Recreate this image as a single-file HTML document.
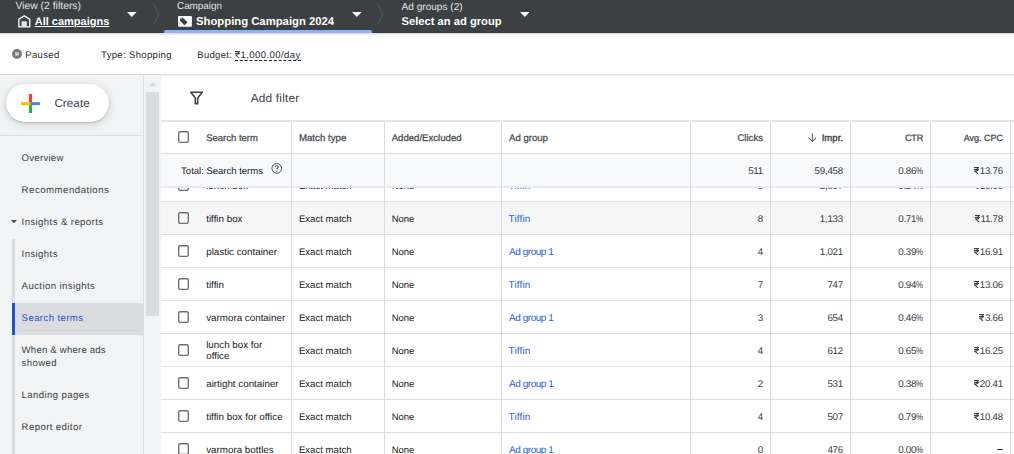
<!DOCTYPE html>
<html><head><meta charset="utf-8"><style>
html,body{margin:0;padding:0;}
body{width:1014px;height:454px;overflow:hidden;position:relative;background:#fff;font-family:"Liberation Sans",sans-serif;}
.t{position:absolute;white-space:nowrap;line-height:20px;text-rendering:geometricPrecision;}
.r{position:absolute;}
.cb{position:absolute;width:8.6px;height:9.4px;border:1.5px solid #6a6c6f;border-radius:1.2px;}
</style></head><body>
<div class="r" style="left:0px;top:0px;width:1014px;height:33px;background:#3c4043;"></div>
<div class="r" style="left:0px;top:32px;width:1014px;height:1px;background:#36393c;"></div>
<div class="r" style="left:0px;top:33px;width:1014px;height:2px;background:linear-gradient(#dcdde0,#f0f1f2);"></div>
<div class="t" style="top:-3px;font-size:10.4px;color:#e0e2e5;left:15.40px;">View (2 filters)</div>
<div class="t" style="top:12px;font-size:11px;color:#ffffff;font-weight:700;left:34.70px;text-decoration:underline;text-underline-offset:0.6px;text-decoration-thickness:1px;">All campaigns</div>
<div class="t" style="top:-3px;font-size:9.9px;color:#e0e2e5;left:177.00px;">Campaign</div>
<div class="t" style="top:12px;font-size:11.3px;color:#ffffff;font-weight:700;left:196.00px;">Shopping Campaign 2024</div>
<div class="t" style="top:-2px;font-size:10.1px;color:#e0e2e5;left:401.50px;">Ad groups (2)</div>
<div class="t" style="top:12px;font-size:11.2px;color:#ffffff;font-weight:700;left:401.50px;">Select an ad group</div>
<svg class="r" style="left:17.5px;top:14.5px" width="13" height="13" viewBox="0 0 13 13"><path d="M0.85 11.85V4.3L6.3 0.85L11.75 4.3V11.85Z" fill="none" stroke="#fff" stroke-width="1.3" stroke-linejoin="round"/><rect x="3.5" y="6.3" width="5.3" height="5.6" fill="#e6e6e6"/></svg>
<svg class="r" style="left:178px;top:15.5px" width="14" height="11" viewBox="0 0 14 11"><rect x="0" y="0.1" width="13.9" height="10.7" rx="1.2" fill="#fff"/><path d="M1.95 1.66H4.6L9.5 5.9L6.5 9.4L1.95 4.5Z" fill="#3c4043"/><circle cx="2.95" cy="2.7" r="0.65" fill="#fff"/></svg>
<svg class="r" style="left:127.3px;top:12.1px" width="9.6" height="4.9" viewBox="0 0 9.6 4.9"><path d="M0 0H9.6L4.8 4.9Z" fill="#fff"/></svg>
<svg class="r" style="left:352.2px;top:12.1px" width="9.6" height="4.9" viewBox="0 0 9.6 4.9"><path d="M0 0H9.6L4.8 4.9Z" fill="#fff"/></svg>
<svg class="r" style="left:519.8px;top:12.1px" width="9.6" height="4.9" viewBox="0 0 9.6 4.9"><path d="M0 0H9.6L4.8 4.9Z" fill="#fff"/></svg>
<svg class="r" style="left:153px;top:3px" width="8" height="23" viewBox="0 0 8 23"><path d="M0.6 0.6L6.0 11.2L0.6 21.6" fill="none" stroke="#5f6367" stroke-width="0.85"/></svg>
<svg class="r" style="left:377px;top:3px" width="8" height="23" viewBox="0 0 8 23"><path d="M0.6 0.6L6.0 11.2L0.6 21.6" fill="none" stroke="#5f6367" stroke-width="0.85"/></svg>
<div class="r" style="left:164px;top:30px;width:208px;height:3px;background:#8ab4f8;border-radius:2px 2px 0 0;"></div>
<svg class="r" style="left:12px;top:49.2px" width="10" height="10" viewBox="0 0 10 10"><circle cx="5" cy="4.9" r="4.95" fill="#777879"/><rect x="3.1" y="3.1" width="3.7" height="3.5" fill="#cdcdcd"/></svg>
<div class="t" style="top:46px;font-size:9.6px;color:#2b2e31;letter-spacing:0.3px;left:25.20px;">Paused</div>
<div class="t" style="top:46px;font-size:9.6px;color:#2b2e31;letter-spacing:0.3px;left:101.00px;">Type: Shopping</div>
<div class="t" style="top:46px;font-size:9.5px;color:#2b2e31;letter-spacing:0.3px;left:197.30px;">Budget:</div>
<div class="t" style="top:46px;font-size:9.6px;color:#2b2e31;letter-spacing:0.4px;left:234.60px;"><svg width="5" height="6.8" viewBox="0 0 5 7" preserveAspectRatio="none" style="display:inline-block;vertical-align:0;margin-right:0.8px"><path d="M0 0.55H5M0 2.45H5M0.6 0.55C3.3 0.55 3.9 1.5 3.9 2.3C3.9 3.4 2.9 4.1 1.2 4.1H0.6L3.9 6.9" fill="none" stroke="#2b2e31" stroke-width="0.95"/></svg>1,000.00/day</div>
<div class="r" style="left:234.5px;top:60px;width:66px;height:0;border-top:1px dashed #202124"></div>
<div class="r" style="left:0px;top:74px;width:1014px;height:1px;background:#dadce0;"></div>
<div class="r" style="left:161px;top:75px;width:853px;height:1px;background:#f2f3f4;"></div>
<div class="r" style="left:0px;top:75px;width:143px;height:379px;background:#f1f3f4;"></div>
<div class="r" style="left:143px;top:75px;width:1px;height:379px;background:#dadce0;"></div>
<div class="r" style="left:144px;top:75px;width:17px;height:379px;background:#f1f3f4;"></div>
<svg class="r" style="left:148.9px;top:81.9px" width="7.2" height="4.3" viewBox="0 0 7.2 4.3"><path d="M0 4.3H7.2L3.6 0Z" fill="#d6d8dc"/></svg>
<div class="r" style="left:146px;top:92px;width:13px;height:224px;background:#dadce0;"></div>
<div class="r" style="left:6px;top:84px;width:103px;height:38px;background:#ffffff;border-radius:19px;box-shadow:0 1px 2px 0 rgba(60,64,67,.25),0 2px 6px 2px rgba(60,64,67,.12);"></div>
<svg class="r" style="left:20.7px;top:94px" width="19" height="19" viewBox="0 0 19 19"><rect x="7.9" y="0" width="3.2" height="9.5" fill="#ea4335"/><rect x="9.5" y="8.1" width="9.5" height="3" fill="#4285f4"/><rect x="7.9" y="9.5" width="3.2" height="9.5" fill="#34a853"/><rect x="0" y="8.1" width="9.5" height="3" fill="#fbbc04"/></svg>
<div class="t" style="top:94px;font-size:11.6px;color:#3c4043;letter-spacing:0.1px;left:54.40px;">Create</div>
<div class="r" style="left:0px;top:135px;width:143px;height:1px;background:#dadce0;"></div>
<div class="t" style="top:149px;font-size:9.6px;color:#3c4043;letter-spacing:0.25px;left:21.60px;">Overview</div>
<div class="t" style="top:181px;font-size:9.6px;color:#3c4043;letter-spacing:0.52px;left:21.60px;">Recommendations</div>
<div class="t" style="top:213px;font-size:9.6px;color:#3c4043;letter-spacing:0.4px;left:21.60px;">Insights &amp; reports</div>
<div class="t" style="top:245px;font-size:9.6px;color:#3c4043;letter-spacing:0.4px;left:21.60px;">Insights</div>
<div class="t" style="top:277px;font-size:9.6px;color:#3c4043;letter-spacing:0.4px;left:21.60px;">Auction insights</div>
<svg class="r" style="left:11px;top:220px" width="6" height="3.2" viewBox="0 0 6 3.2"><path d="M0 0H6L3 3.2Z" fill="#44484c"/></svg>
<div class="r" style="left:12px;top:239px;width:3px;height:215px;background:#dadce0;"></div>
<div class="r" style="left:12px;top:303px;width:131px;height:32px;background:#dadce0;"></div>
<div class="r" style="left:12px;top:303px;width:3px;height:32px;background:#1a56c4;"></div>
<div class="t" style="top:309px;font-size:9.6px;color:#1a56c4;letter-spacing:0.4px;left:21.60px;">Search terms</div>
<div class="t" style="top:341px;font-size:9.6px;color:#3c4043;letter-spacing:0.2px;left:21.60px;">When &amp; where ads</div>
<div class="t" style="top:354px;font-size:9.6px;color:#3c4043;letter-spacing:0.4px;left:21.60px;">showed</div>
<div class="t" style="top:386px;font-size:9.6px;color:#3c4043;letter-spacing:0.4px;left:21.60px;">Landing pages</div>
<div class="t" style="top:418px;font-size:9.6px;color:#3c4043;letter-spacing:0.4px;left:21.60px;">Report editor</div>
<svg class="r" style="left:190px;top:90.5px" width="13" height="14" viewBox="0 0 13 14"><path d="M0.75 1.25H12.25L7.7 6.9V12.6H5.3V6.9Z" fill="none" stroke="#3c4043" stroke-width="1.55" stroke-linejoin="miter"/></svg>
<div class="t" style="top:88px;font-size:11.8px;color:#3c4043;letter-spacing:0.22px;left:250.70px;">Add filter</div>
<div class="r" style="left:161px;top:120px;width:853px;height:2px;background:#e4e5e7;"></div>
<div class="r" style="left:161px;top:153px;width:853px;height:1px;background:#dadce0;"></div>
<div class="r" style="left:161px;top:154px;width:853px;height:32px;background:#f8f9fa;"></div>
<div class="r" style="left:0;top:187px;width:1014px;height:267px;overflow:hidden"><div class="r" style="left:161px;top:14px;width:853px;height:1px;background:#dddee1;"></div><svg class="r" style="left:178.1px;top:-8px" width="11" height="12" viewBox="0 0 11 12"><rect x="0.7" y="0.7" width="9.6" height="10.6" rx="1.4" fill="none" stroke="#6c6e71" stroke-width="1.35"/></svg><div class="t" style="top:-10px;font-size:9.8px;color:#202124;left:206.20px;">lunch box</div><div class="t" style="top:-10px;font-size:9.6px;color:#202124;left:298.90px;">Exact match</div><div class="t" style="top:-10px;font-size:9.5px;color:#202124;left:391.70px;">None</div><div class="t" style="top:-10px;font-size:10px;color:#1b64d6;letter-spacing:0.15px;left:508.50px;">Tiffin</div><div class="t" style="top:-10px;font-size:9.8px;color:#3a3d40;letter-spacing:-0.25px;right:251.00px;text-align:right;">5</div><div class="t" style="top:-10px;font-size:9.8px;color:#3a3d40;letter-spacing:-0.25px;right:171.00px;text-align:right;">2,807</div><div class="t" style="top:-10px;font-size:9.8px;color:#3a3d40;letter-spacing:-0.25px;right:91.00px;text-align:right;">0.24<span style="display:inline-block;transform:scaleX(0.8);transform-origin:left;margin-right:-1.75px">%</span></div><div class="t" style="top:-10px;font-size:9.8px;color:#3a3d40;letter-spacing:-0.25px;right:11.00px;text-align:right;"><svg width="5.2" height="7" viewBox="0 0 5 7" preserveAspectRatio="none" style="display:inline-block;vertical-align:0;margin-right:0.7px"><path d="M0 0.55H5M0 2.45H5M0.6 0.55C3.3 0.55 3.9 1.5 3.9 2.3C3.9 3.4 2.9 4.1 1.2 4.1H0.6L3.9 6.9" fill="none" stroke="#3a3d40" stroke-width="1.05"/></svg>15.05</div><div class="r" style="left:161px;top:15px;width:853px;height:32px;background:#f6f6f6;"></div><div class="r" style="left:161px;top:47px;width:853px;height:1px;background:#dddee1;"></div><svg class="r" style="left:178.1px;top:25px" width="11" height="12" viewBox="0 0 11 12"><rect x="0.7" y="0.7" width="9.6" height="10.6" rx="1.4" fill="none" stroke="#6c6e71" stroke-width="1.35"/></svg><div class="t" style="top:23px;font-size:9.8px;color:#202124;left:206.20px;">tiffin box</div><div class="t" style="top:23px;font-size:9.6px;color:#202124;left:298.90px;">Exact match</div><div class="t" style="top:23px;font-size:9.5px;color:#202124;left:391.70px;">None</div><div class="t" style="top:23px;font-size:10px;color:#1b64d6;letter-spacing:0.15px;left:508.50px;">Tiffin</div><div class="t" style="top:23px;font-size:9.8px;color:#3a3d40;letter-spacing:-0.25px;right:251.00px;text-align:right;">8</div><div class="t" style="top:23px;font-size:9.8px;color:#3a3d40;letter-spacing:-0.25px;right:171.00px;text-align:right;">1,133</div><div class="t" style="top:23px;font-size:9.8px;color:#3a3d40;letter-spacing:-0.25px;right:91.00px;text-align:right;">0.71<span style="display:inline-block;transform:scaleX(0.8);transform-origin:left;margin-right:-1.75px">%</span></div><div class="t" style="top:23px;font-size:9.8px;color:#3a3d40;letter-spacing:-0.25px;right:11.00px;text-align:right;"><svg width="5.2" height="7" viewBox="0 0 5 7" preserveAspectRatio="none" style="display:inline-block;vertical-align:0;margin-right:0.7px"><path d="M0 0.55H5M0 2.45H5M0.6 0.55C3.3 0.55 3.9 1.5 3.9 2.3C3.9 3.4 2.9 4.1 1.2 4.1H0.6L3.9 6.9" fill="none" stroke="#3a3d40" stroke-width="1.05"/></svg>11.78</div><div class="r" style="left:161px;top:80px;width:853px;height:1px;background:#dddee1;"></div><svg class="r" style="left:178.1px;top:58px" width="11" height="12" viewBox="0 0 11 12"><rect x="0.7" y="0.7" width="9.6" height="10.6" rx="1.4" fill="none" stroke="#6c6e71" stroke-width="1.35"/></svg><div class="t" style="top:56px;font-size:9.8px;color:#202124;left:206.20px;">plastic container</div><div class="t" style="top:56px;font-size:9.6px;color:#202124;left:298.90px;">Exact match</div><div class="t" style="top:56px;font-size:9.5px;color:#202124;left:391.70px;">None</div><div class="t" style="top:56px;font-size:10px;color:#1b64d6;letter-spacing:-0.45px;left:509.00px;">Ad group 1</div><div class="t" style="top:56px;font-size:9.8px;color:#3a3d40;letter-spacing:-0.25px;right:251.00px;text-align:right;">4</div><div class="t" style="top:56px;font-size:9.8px;color:#3a3d40;letter-spacing:-0.25px;right:171.00px;text-align:right;">1,021</div><div class="t" style="top:56px;font-size:9.8px;color:#3a3d40;letter-spacing:-0.25px;right:91.00px;text-align:right;">0.39<span style="display:inline-block;transform:scaleX(0.8);transform-origin:left;margin-right:-1.75px">%</span></div><div class="t" style="top:56px;font-size:9.8px;color:#3a3d40;letter-spacing:-0.25px;right:11.00px;text-align:right;"><svg width="5.2" height="7" viewBox="0 0 5 7" preserveAspectRatio="none" style="display:inline-block;vertical-align:0;margin-right:0.7px"><path d="M0 0.55H5M0 2.45H5M0.6 0.55C3.3 0.55 3.9 1.5 3.9 2.3C3.9 3.4 2.9 4.1 1.2 4.1H0.6L3.9 6.9" fill="none" stroke="#3a3d40" stroke-width="1.05"/></svg>16.91</div><div class="r" style="left:161px;top:113px;width:853px;height:1px;background:#dddee1;"></div><svg class="r" style="left:178.1px;top:91px" width="11" height="12" viewBox="0 0 11 12"><rect x="0.7" y="0.7" width="9.6" height="10.6" rx="1.4" fill="none" stroke="#6c6e71" stroke-width="1.35"/></svg><div class="t" style="top:89px;font-size:9.8px;color:#202124;left:206.20px;">tiffin</div><div class="t" style="top:89px;font-size:9.6px;color:#202124;left:298.90px;">Exact match</div><div class="t" style="top:89px;font-size:9.5px;color:#202124;left:391.70px;">None</div><div class="t" style="top:89px;font-size:10px;color:#1b64d6;letter-spacing:0.15px;left:508.50px;">Tiffin</div><div class="t" style="top:89px;font-size:9.8px;color:#3a3d40;letter-spacing:-0.25px;right:251.00px;text-align:right;">7</div><div class="t" style="top:89px;font-size:9.8px;color:#3a3d40;letter-spacing:-0.25px;right:171.00px;text-align:right;">747</div><div class="t" style="top:89px;font-size:9.8px;color:#3a3d40;letter-spacing:-0.25px;right:91.00px;text-align:right;">0.94<span style="display:inline-block;transform:scaleX(0.8);transform-origin:left;margin-right:-1.75px">%</span></div><div class="t" style="top:89px;font-size:9.8px;color:#3a3d40;letter-spacing:-0.25px;right:11.00px;text-align:right;"><svg width="5.2" height="7" viewBox="0 0 5 7" preserveAspectRatio="none" style="display:inline-block;vertical-align:0;margin-right:0.7px"><path d="M0 0.55H5M0 2.45H5M0.6 0.55C3.3 0.55 3.9 1.5 3.9 2.3C3.9 3.4 2.9 4.1 1.2 4.1H0.6L3.9 6.9" fill="none" stroke="#3a3d40" stroke-width="1.05"/></svg>13.06</div><div class="r" style="left:161px;top:146px;width:853px;height:1px;background:#dddee1;"></div><svg class="r" style="left:178.1px;top:124px" width="11" height="12" viewBox="0 0 11 12"><rect x="0.7" y="0.7" width="9.6" height="10.6" rx="1.4" fill="none" stroke="#6c6e71" stroke-width="1.35"/></svg><div class="t" style="top:122px;font-size:9.8px;color:#202124;left:206.20px;">varmora container</div><div class="t" style="top:122px;font-size:9.6px;color:#202124;left:298.90px;">Exact match</div><div class="t" style="top:122px;font-size:9.5px;color:#202124;left:391.70px;">None</div><div class="t" style="top:122px;font-size:10px;color:#1b64d6;letter-spacing:-0.45px;left:509.00px;">Ad group 1</div><div class="t" style="top:122px;font-size:9.8px;color:#3a3d40;letter-spacing:-0.25px;right:251.00px;text-align:right;">3</div><div class="t" style="top:122px;font-size:9.8px;color:#3a3d40;letter-spacing:-0.25px;right:171.00px;text-align:right;">654</div><div class="t" style="top:122px;font-size:9.8px;color:#3a3d40;letter-spacing:-0.25px;right:91.00px;text-align:right;">0.46<span style="display:inline-block;transform:scaleX(0.8);transform-origin:left;margin-right:-1.75px">%</span></div><div class="t" style="top:122px;font-size:9.8px;color:#3a3d40;letter-spacing:-0.25px;right:11.00px;text-align:right;"><svg width="5.2" height="7" viewBox="0 0 5 7" preserveAspectRatio="none" style="display:inline-block;vertical-align:0;margin-right:0.7px"><path d="M0 0.55H5M0 2.45H5M0.6 0.55C3.3 0.55 3.9 1.5 3.9 2.3C3.9 3.4 2.9 4.1 1.2 4.1H0.6L3.9 6.9" fill="none" stroke="#3a3d40" stroke-width="1.05"/></svg>3.66</div><div class="r" style="left:161px;top:179px;width:853px;height:1px;background:#dddee1;"></div><svg class="r" style="left:178.1px;top:157px" width="11" height="12" viewBox="0 0 11 12"><rect x="0.7" y="0.7" width="9.6" height="10.6" rx="1.4" fill="none" stroke="#6c6e71" stroke-width="1.35"/></svg><div class="t" style="top:149px;font-size:9.8px;color:#202124;left:206.20px;">lunch box for</div><div class="t" style="top:160px;font-size:9.8px;color:#202124;left:206.20px;">office</div><div class="t" style="top:155px;font-size:9.6px;color:#202124;left:298.90px;">Exact match</div><div class="t" style="top:155px;font-size:9.5px;color:#202124;left:391.70px;">None</div><div class="t" style="top:155px;font-size:10px;color:#1b64d6;letter-spacing:0.15px;left:508.50px;">Tiffin</div><div class="t" style="top:155px;font-size:9.8px;color:#3a3d40;letter-spacing:-0.25px;right:251.00px;text-align:right;">4</div><div class="t" style="top:155px;font-size:9.8px;color:#3a3d40;letter-spacing:-0.25px;right:171.00px;text-align:right;">612</div><div class="t" style="top:155px;font-size:9.8px;color:#3a3d40;letter-spacing:-0.25px;right:91.00px;text-align:right;">0.65<span style="display:inline-block;transform:scaleX(0.8);transform-origin:left;margin-right:-1.75px">%</span></div><div class="t" style="top:155px;font-size:9.8px;color:#3a3d40;letter-spacing:-0.25px;right:11.00px;text-align:right;"><svg width="5.2" height="7" viewBox="0 0 5 7" preserveAspectRatio="none" style="display:inline-block;vertical-align:0;margin-right:0.7px"><path d="M0 0.55H5M0 2.45H5M0.6 0.55C3.3 0.55 3.9 1.5 3.9 2.3C3.9 3.4 2.9 4.1 1.2 4.1H0.6L3.9 6.9" fill="none" stroke="#3a3d40" stroke-width="1.05"/></svg>16.25</div><div class="r" style="left:161px;top:212px;width:853px;height:1px;background:#dddee1;"></div><svg class="r" style="left:178.1px;top:190px" width="11" height="12" viewBox="0 0 11 12"><rect x="0.7" y="0.7" width="9.6" height="10.6" rx="1.4" fill="none" stroke="#6c6e71" stroke-width="1.35"/></svg><div class="t" style="top:188px;font-size:9.8px;color:#202124;left:206.20px;">airtight container</div><div class="t" style="top:188px;font-size:9.6px;color:#202124;left:298.90px;">Exact match</div><div class="t" style="top:188px;font-size:9.5px;color:#202124;left:391.70px;">None</div><div class="t" style="top:188px;font-size:10px;color:#1b64d6;letter-spacing:-0.45px;left:509.00px;">Ad group 1</div><div class="t" style="top:188px;font-size:9.8px;color:#3a3d40;letter-spacing:-0.25px;right:251.00px;text-align:right;">2</div><div class="t" style="top:188px;font-size:9.8px;color:#3a3d40;letter-spacing:-0.25px;right:171.00px;text-align:right;">531</div><div class="t" style="top:188px;font-size:9.8px;color:#3a3d40;letter-spacing:-0.25px;right:91.00px;text-align:right;">0.38<span style="display:inline-block;transform:scaleX(0.8);transform-origin:left;margin-right:-1.75px">%</span></div><div class="t" style="top:188px;font-size:9.8px;color:#3a3d40;letter-spacing:-0.25px;right:11.00px;text-align:right;"><svg width="5.2" height="7" viewBox="0 0 5 7" preserveAspectRatio="none" style="display:inline-block;vertical-align:0;margin-right:0.7px"><path d="M0 0.55H5M0 2.45H5M0.6 0.55C3.3 0.55 3.9 1.5 3.9 2.3C3.9 3.4 2.9 4.1 1.2 4.1H0.6L3.9 6.9" fill="none" stroke="#3a3d40" stroke-width="1.05"/></svg>20.41</div><div class="r" style="left:161px;top:245px;width:853px;height:1px;background:#dddee1;"></div><svg class="r" style="left:178.1px;top:223px" width="11" height="12" viewBox="0 0 11 12"><rect x="0.7" y="0.7" width="9.6" height="10.6" rx="1.4" fill="none" stroke="#6c6e71" stroke-width="1.35"/></svg><div class="t" style="top:221px;font-size:9.8px;color:#202124;left:206.20px;">tiffin box for office</div><div class="t" style="top:221px;font-size:9.6px;color:#202124;left:298.90px;">Exact match</div><div class="t" style="top:221px;font-size:9.5px;color:#202124;left:391.70px;">None</div><div class="t" style="top:221px;font-size:10px;color:#1b64d6;letter-spacing:0.15px;left:508.50px;">Tiffin</div><div class="t" style="top:221px;font-size:9.8px;color:#3a3d40;letter-spacing:-0.25px;right:251.00px;text-align:right;">4</div><div class="t" style="top:221px;font-size:9.8px;color:#3a3d40;letter-spacing:-0.25px;right:171.00px;text-align:right;">507</div><div class="t" style="top:221px;font-size:9.8px;color:#3a3d40;letter-spacing:-0.25px;right:91.00px;text-align:right;">0.79<span style="display:inline-block;transform:scaleX(0.8);transform-origin:left;margin-right:-1.75px">%</span></div><div class="t" style="top:221px;font-size:9.8px;color:#3a3d40;letter-spacing:-0.25px;right:11.00px;text-align:right;"><svg width="5.2" height="7" viewBox="0 0 5 7" preserveAspectRatio="none" style="display:inline-block;vertical-align:0;margin-right:0.7px"><path d="M0 0.55H5M0 2.45H5M0.6 0.55C3.3 0.55 3.9 1.5 3.9 2.3C3.9 3.4 2.9 4.1 1.2 4.1H0.6L3.9 6.9" fill="none" stroke="#3a3d40" stroke-width="1.05"/></svg>10.48</div><div class="r" style="left:161px;top:278px;width:853px;height:1px;background:#dddee1;"></div><svg class="r" style="left:178.1px;top:256px" width="11" height="12" viewBox="0 0 11 12"><rect x="0.7" y="0.7" width="9.6" height="10.6" rx="1.4" fill="none" stroke="#6c6e71" stroke-width="1.35"/></svg><div class="t" style="top:254px;font-size:9.8px;color:#202124;left:206.20px;">varmora bottles</div><div class="t" style="top:254px;font-size:9.6px;color:#202124;left:298.90px;">Exact match</div><div class="t" style="top:254px;font-size:9.5px;color:#202124;left:391.70px;">None</div><div class="t" style="top:254px;font-size:10px;color:#1b64d6;letter-spacing:-0.45px;left:509.00px;">Ad group 1</div><div class="t" style="top:254px;font-size:9.8px;color:#3a3d40;letter-spacing:-0.25px;right:251.00px;text-align:right;">0</div><div class="t" style="top:254px;font-size:9.8px;color:#3a3d40;letter-spacing:-0.25px;right:171.00px;text-align:right;">476</div><div class="t" style="top:254px;font-size:9.8px;color:#3a3d40;letter-spacing:-0.25px;right:91.00px;text-align:right;">0.00<span style="display:inline-block;transform:scaleX(0.8);transform-origin:left;margin-right:-1.75px">%</span></div><div class="r" style="left:996.6px;top:262.4px;width:6.5px;height:1.1px;background:#33363a;"></div></div>
<div class="r" style="left:161px;top:186px;width:853px;height:2px;background:#e8eaed;"></div>
<svg class="r" style="left:178.1px;top:131.2px" width="11" height="12" viewBox="0 0 11 12"><rect x="0.7" y="0.7" width="9.6" height="10.6" rx="1.4" fill="none" stroke="#6c6e71" stroke-width="1.35"/></svg>
<div class="t" style="top:129px;font-size:9.5px;color:#4d5155;left:206.20px;-webkit-text-stroke:0.3px #4d5155;">Search term</div>
<div class="t" style="top:129px;font-size:9.7px;color:#4d5155;left:298.90px;-webkit-text-stroke:0.3px #4d5155;">Match type</div>
<div class="t" style="top:129px;font-size:9.6px;color:#4d5155;left:391.70px;-webkit-text-stroke:0.3px #4d5155;">Added/Excluded</div>
<div class="t" style="top:129px;font-size:9.6px;color:#4d5155;left:509.00px;-webkit-text-stroke:0.3px #4d5155;">Ad group</div>
<div class="t" style="top:129px;font-size:9.6px;color:#4d5155;right:251.00px;text-align:right;-webkit-text-stroke:0.3px #4d5155;">Clicks</div>
<div class="t" style="top:129px;font-size:9.6px;color:#45494d;right:171.00px;text-align:right;-webkit-text-stroke:0.4px #45494d;">Impr.</div>
<svg class="r" style="left:808px;top:133px" width="9" height="10" viewBox="0 0 9 10"><path d="M4.3 0.3V8.8M0.4 4.5L4.3 8.5L8.2 4.5" fill="none" stroke="#5a5e62" stroke-width="1.05"/></svg>
<div class="t" style="top:128px;font-size:9.2px;color:#4d5155;letter-spacing:-0.3px;right:91.00px;text-align:right;-webkit-text-stroke:0.3px #4d5155;">CTR</div>
<div class="t" style="top:128px;font-size:9px;color:#4d5155;right:11.00px;text-align:right;-webkit-text-stroke:0.3px #4d5155;">Avg. CPC</div>
<div class="t" style="top:162px;font-size:9.5px;color:#202124;left:181.10px;">Total: Search terms</div>
<svg class="r" style="left:270.5px;top:163px" width="12" height="11" viewBox="0 0 12 11"><circle cx="5.8" cy="5.4" r="4.85" fill="none" stroke="#4a4e52" stroke-width="1.0"/><path d="M4.2 4.3C4.2 3.3 4.9 2.75 5.8 2.75C6.7 2.75 7.35 3.3 7.35 4.1C7.35 5.2 5.9 5.3 5.9 6.6" fill="none" stroke="#4a4e52" stroke-width="1.05"/><circle cx="5.9" cy="8.1" r="0.65" fill="#4a4e52"/></svg>
<div class="t" style="top:162px;font-size:9.8px;color:#3a3d40;letter-spacing:-0.25px;right:251.00px;text-align:right;">511</div>
<div class="t" style="top:162px;font-size:9.8px;color:#3a3d40;letter-spacing:-0.25px;right:171.00px;text-align:right;">59,458</div>
<div class="t" style="top:162px;font-size:9.8px;color:#3a3d40;letter-spacing:-0.25px;right:91.00px;text-align:right;">0.86<span style="display:inline-block;transform:scaleX(0.8);transform-origin:left;margin-right:-1.75px">%</span></div>
<div class="t" style="top:162px;font-size:9.8px;color:#3a3d40;letter-spacing:-0.25px;right:11.00px;text-align:right;"><svg width="5.2" height="7" viewBox="0 0 5 7" preserveAspectRatio="none" style="display:inline-block;vertical-align:0;margin-right:0.7px"><path d="M0 0.55H5M0 2.45H5M0.6 0.55C3.3 0.55 3.9 1.5 3.9 2.3C3.9 3.4 2.9 4.1 1.2 4.1H0.6L3.9 6.9" fill="none" stroke="#3a3d40" stroke-width="1.05"/></svg>13.76</div>
<div class="r" style="left:291px;top:122px;width:1px;height:332px;background:#dadce0;"></div>
<div class="r" style="left:384px;top:122px;width:1px;height:332px;background:#dadce0;"></div>
<div class="r" style="left:501px;top:122px;width:1px;height:332px;background:#dadce0;"></div>
<div class="r" style="left:690px;top:122px;width:1px;height:332px;background:#dadce0;"></div>
<div class="r" style="left:770px;top:122px;width:1px;height:332px;background:#dadce0;"></div>
<div class="r" style="left:850px;top:122px;width:1px;height:332px;background:#dadce0;"></div>
<div class="r" style="left:930px;top:122px;width:1px;height:332px;background:#dadce0;"></div>
<div class="r" style="left:1010px;top:122px;width:1px;height:332px;background:#dadce0;"></div>
</body></html>
